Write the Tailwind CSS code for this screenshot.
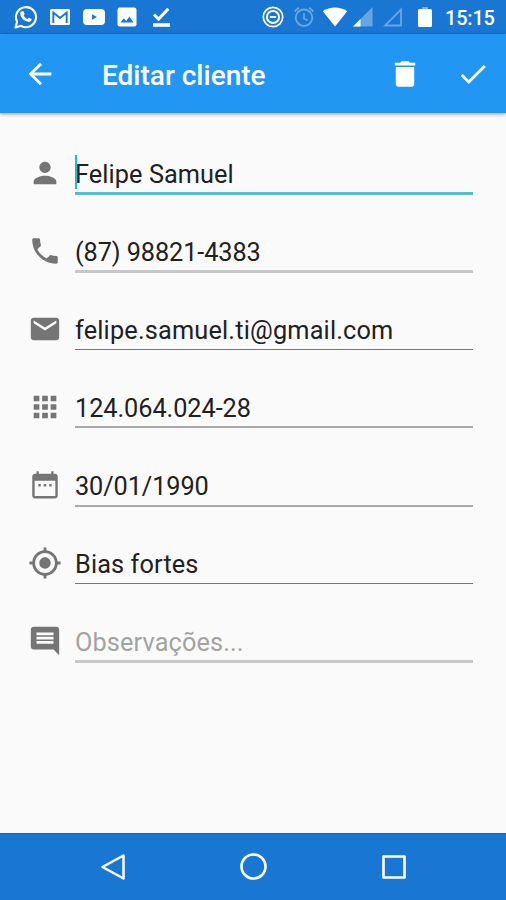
<!DOCTYPE html>
<html lang="pt-BR">
  <head>
    <meta charset="UTF-8" />
    <meta name="viewport" content="width=device-width, initial-scale=1.0" />
    <title>Editar cliente</title>
    <script src="https://cdn.jsdelivr.net/npm/@tailwindcss/browser@4"></script>
  </head>
  <body class="bg-[#fafafa] font-['Roboto',sans-serif]">
    <div class="flex h-[900px] w-[506px] flex-col overflow-hidden">
      <!-- Status bar -->
      <div class="flex h-[34px] shrink-0 items-center bg-[#1976d2] text-white">
        <svg class="ml-[13px] h-[26px] w-[26px]" viewBox="0 0 26 26" fill="none" stroke="currentColor">
          <path d="M2.5 23.5l1.6-5.8A10 10 0 1 1 8 21.8z" stroke-width="2.1" stroke-linejoin="round" />
          <path d="M8.6 7.2l1.6-.3 1.5 3-1 1.5c.9 1.8 2 2.8 3.8 3.6l1.4-1.3 2.8 1.4c.1 1.6-1 2.7-2.8 2.8-4.3-.2-8.5-4.3-8.7-8.1 0-1.1.5-2 1.4-2.6z" fill="currentColor" stroke="none" />
        </svg>
        <svg class="ml-[10px] h-[18px] w-[22px]" viewBox="0 0 22 18">
          <rect x="1" y="1" width="20" height="16" rx="1.5" fill="currentColor" />
          <path d="M4.3 15V4.5L11 10l6.7-5.5V15" fill="none" stroke="#1976d2" stroke-width="1.9" />
        </svg>
        <svg class="ml-[11px] h-[18px] w-[24px]" viewBox="0 0 24 18">
          <rect x="1" y="1" width="22" height="16" rx="4" fill="currentColor" />
          <path d="M10 6.2l5 2.8-5 2.8z" fill="#1976d2" />
        </svg>
        <svg class="ml-[11px] h-[20px] w-[20px]" viewBox="0 0 20 20">
          <rect x=".5" y=".5" width="19" height="19" rx="2.2" fill="currentColor" />
          <path d="M3.5 15.5l3.3-4.3 2.4 2.8 3.3-4.5 4 6z" fill="#1976d2" />
        </svg>
        <svg class="ml-[15px] h-[21px] w-[19px]" viewBox="0 0 19 21" fill="none" stroke="currentColor">
          <path d="M2 7.5l4.6 4.5L16.3 1.7" stroke-width="3" />
          <path d="M1 18h17" stroke-width="3.6" />
        </svg>

        <svg class="ml-[91px] h-[22px] w-[22px]" viewBox="0 0 22 22" fill="none" stroke="currentColor">
          <circle cx="11" cy="11" r="9.7" stroke-width="1.7" />
          <circle cx="11" cy="11" r="6.1" stroke-width="2" />
          <path d="M7.8 11h6.4" stroke-width="1.9" />
        </svg>
        <svg class="ml-[9px] h-[22px] w-[22px] text-white/35" viewBox="0 0 22 22" fill="none" stroke="currentColor" stroke-width="1.8">
          <path d="M11 3.5a8.2 8.2 0 1 0 .01 0zM1.5 5.5l4.3-3.7M20.5 5.500l-4.300-3.700M11 7.500v5l3.700 2" />
        </svg>
        <svg class="ml-[7px] h-[20px] w-[26px]" viewBox="0 0 26 20" fill="currentColor">
          <path d="M.8 4.2C7.8-.7 18.2-.7 25.2 4.2L13 19.5z" />
        </svg>
        <svg class="ml-[4px] h-[20px] w-[21px]" viewBox="0 0 21 20" fill="currentColor">
          <path d="M20.5 0v19.5H1z" fill-opacity=".35" />
          <path d="M8.5 12v7.5H1z" />
        </svg>
        <svg class="ml-[9px] h-[20px] w-[21px] text-white/35" viewBox="0 0 21 20" fill="none" stroke="currentColor" stroke-width="1.8">
          <path d="M19 2.5v16H3z" />
        </svg>
        <svg class="ml-[14px] h-[20px] w-[16px]" viewBox="0 0 16 20" fill="currentColor">
          <path d="M1 3.5Q1 2 2.5 2H13.5Q15 2 15 3.5V18.5Q15 20 13.5 20H2.5Q1 20 1 18.5z" />
          <path d="M5 0h6v2H5z" fill-opacity=".4" />
        </svg>
        <span class="mt-[2px] ml-[12px] text-[20px] leading-none font-medium tracking-[-0.2px]">15:15</span>
      </div>

      <!-- Toolbar -->
      <header class="z-10 flex h-[79px] shrink-0 items-center bg-[#2196f3] text-white shadow-[0_1px_4px_rgba(0,0,0,0.4)]">
        <button class="ml-[23px]">
          <svg class="h-[34px] w-[34px]" viewBox="0 0 24 24" fill="currentColor">
            <path d="M20 11H7.83l5.59-5.59L12 4l-8 8 8 8 1.41-1.41L7.83 13H20v-2z" />
          </svg>
        </button>
        <h1 class="mt-[5px] ml-[45px] text-[28px] leading-none font-medium">Editar cliente</h1>
        <button class="ml-auto">
          <svg class="h-[34px] w-[34px]" viewBox="0 0 24 24" fill="currentColor">
            <path d="M5.5 7v12.2c0 1.1.7 1.8 1.8 1.8h9.4c1.1 0 1.8-.7 1.8-1.8V7h-13zM19.2 4h-3.7l-1-1h-5l-1 1H4.8v2h14.4V4z" />
          </svg>
        </button>
        <button class="mr-[16px] ml-[34px]">
          <svg class="h-[34px] w-[34px]" viewBox="0 0 24 24" fill="currentColor">
            <path d="M9 16.17L4.83 12l-1.42 1.41L9 19 21 7l-1.41-1.41z" />
          </svg>
        </button>
      </header>

      <!-- Form -->
      <form class="flex-1 pt-[21px] pr-[33px] pl-[28px] text-[#757575]">
        <div class="flex h-[78px]">
          <svg class="mt-[22px] mr-[13px] h-[34px] w-[34px] shrink-0" viewBox="0 0 24 24" fill="currentColor">
            <path d="M12 12c2.21 0 4-1.79 4-4s-1.79-4-4-4-4 1.79-4 4 1.79 4 4 4zm0 2c-2.67 0-8 1.34-8 4v2h16v-2c0-2.66-5.33-4-8-4z" />
          </svg>
          <div class="relative h-[61px] flex-1 border-b-3 border-[#55bdd2] pt-[21px]">
            <input type="text" value="Felipe Samuel" class="block h-[38px] w-full text-[25.3px] tracking-[0.08px] text-[#212121] outline-none" />
            <span class="absolute top-[21px] left-0 h-[34px] w-[2px] bg-[#26b8d0]"></span>
          </div>
        </div>

        <div class="flex h-[78px]">
          <svg class="mt-[22px] mr-[13px] h-[34px] w-[34px] shrink-0" viewBox="0 0 24 24" fill="currentColor">
            <path d="M6.62 10.79c1.44 2.83 3.76 5.14 6.59 6.59l2.2-2.2c.27-.27.67-.36 1.02-.24 1.12.37 2.33.57 3.57.57.55 0 1 .45 1 1V20c0 .55-.45 1-1 1-9.39 0-17-7.61-17-17 0-.55.45-1 1-1h3.5c.55 0 1 .45 1 1 0 1.25.2 2.45.57 3.57.11.35.03.74-.25 1.02l-2.2 2.2z" />
          </svg>
          <div class="h-[61px] flex-1 border-b-3 border-[#c8c8c8] pt-[21px]">
            <input type="tel" value="(87) 98821-4383" class="block h-[38px] w-full text-[25.3px] tracking-[-0.1px] text-[#212121] outline-none" />
          </div>
        </div>

        <div class="flex h-[78px]">
          <svg class="mt-[22px] mr-[13px] h-[34px] w-[34px] shrink-0" viewBox="0 0 24 24" fill="currentColor">
            <path d="M20 4H4c-1.1 0-1.99.9-1.99 2L2 18c0 1.1.9 2 2 2h16c1.1 0 2-.9 2-2V6c0-1.1-.9-2-2-2zm0 4l-8 5-8-5V6l8 5 8-5v2z" />
          </svg>
          <div class="h-[60px] flex-1 border-b border-[#757575] pt-[21px]">
            <input type="text" value="felipe.samuel.ti@gmail.com" class="block h-[38px] w-full text-[25.3px] tracking-[0.18px] text-[#212121] outline-none" />
          </div>
        </div>

        <div class="flex h-[78px]">
          <svg class="mt-[22px] mr-[13px] h-[34px] w-[34px] shrink-0" viewBox="0 0 24 24" fill="currentColor">
            <path d="M4 8h4V4H4v4zm6 12h4v-4h-4v4zm-6 0h4v-4H4v4zm0-6h4v-4H4v4zm6 0h4v-4h-4v4zm6-10v4h4V4h-4zm-6 4h4V4h-4v4zm6 6h4v-4h-4v4zm0 6h4v-4h-4v4z" />
          </svg>
          <div class="h-[60px] flex-1 border-b-2 border-[#aaaaaa] pt-[21px]">
            <input type="text" value="124.064.024-28" class="block h-[38px] w-full text-[25.3px] tracking-[-0.06px] text-[#212121] outline-none" />
          </div>
        </div>

        <div class="flex h-[78px]">
          <svg class="mt-[22px] mr-[13px] h-[34px] w-[34px] shrink-0" viewBox="0 0 24 24" fill="currentColor">
            <path d="M9 11.3H7.3V13H9v-1.7zm3.9 0h-1.8V13h1.8v-1.7zm3.8 0H15V13h1.7v-1.7zM19 4h-1V2.3h-1.6V4H7.6V2.3H6V4H5c-1.11 0-1.99.9-1.99 2L3 19.5c0 1.1.89 2 2 2h14c1.1 0 2-.9 2-2V6c0-1.1-.9-2-2-2zm.3 15.8H4.7V9h14.6v10.8z" />
          </svg>
          <div class="h-[61px] flex-1 border-b-2 border-[#aaaaaa] pt-[21px]">
            <input type="text" value="30/01/1990" class="block h-[38px] w-full text-[25.3px] tracking-[-0.1px] text-[#212121] outline-none" />
          </div>
        </div>

        <div class="flex h-[78px]">
          <svg class="mt-[22px] mr-[13px] h-[34px] w-[34px] shrink-0" viewBox="0 0 24 24" fill="currentColor">
            <path d="M12 8c-2.21 0-4 1.79-4 4s1.79 4 4 4 4-1.79 4-4-1.79-4-4-4zm8.94 3c-.46-4.17-3.77-7.48-7.94-7.94V1h-2v2.06C6.83 3.52 3.52 6.83 3.06 11H1v2h2.06c.46 4.17 3.77 7.48 7.94 7.94V23h2v-2.06c4.17-.46 7.48-3.77 7.94-7.94H23v-2h-2.06zM12 19c-3.87 0-7-3.13-7-7s3.13-7 7-7 7 3.13 7 7-3.13 7-7 7z" />
          </svg>
          <div class="h-[60px] flex-1 border-b border-[#757575] pt-[21px]">
            <input type="text" value="Bias fortes" class="block h-[38px] w-full text-[25.3px] tracking-[0.12px] text-[#212121] outline-none" />
          </div>
        </div>

        <div class="flex h-[78px]">
          <svg class="mt-[22px] mr-[13px] h-[34px] w-[34px] shrink-0" viewBox="0 0 24 24" fill="currentColor">
            <path d="M21.99 4c0-1.1-.89-2-1.99-2H4c-1.1 0-2 .9-2 2v12c0 1.1.9 2 2 2h14l4 4-.01-18zM18 14H6v-2h12v2zm0-3H6V9h12v2zm0-3H6V6h12v2z" />
          </svg>
          <div class="h-[61px] flex-1 border-b-3 border-[#c8c8c8] pt-[21px]">
            <input type="text" placeholder="Observações..." class="block h-[38px] w-full text-[25.3px] tracking-[0.12px] placeholder-[#a3a3a3] outline-none" />
          </div>
        </div>
      </form>

      <!-- Navigation bar -->
      <nav class="flex h-[67px] shrink-0 items-center border-t border-[#0f66c4] bg-[#1976d2] pl-[100px] text-white">
        <svg class="h-[28px] w-[26px]" viewBox="0 0 26 28" fill="none" stroke="currentColor" stroke-width="2.5" stroke-linejoin="round">
          <path d="M23.5 2.5v23L2.5 14z" />
        </svg>
        <svg class="ml-[114px] h-[28px] w-[28px]" viewBox="0 0 28 28" fill="none" stroke="currentColor" stroke-width="2.6">
          <circle cx="13.5" cy="13.5" r="12" />
        </svg>
        <svg class="ml-[113px] h-[26px] w-[26px]" viewBox="0 0 26 26" fill="none" stroke="currentColor" stroke-width="2.6" stroke-linejoin="round">
          <path d="M2.5 2.5h21v21h-21z" />
        </svg>
      </nav>
    </div>
  </body>
</html>
